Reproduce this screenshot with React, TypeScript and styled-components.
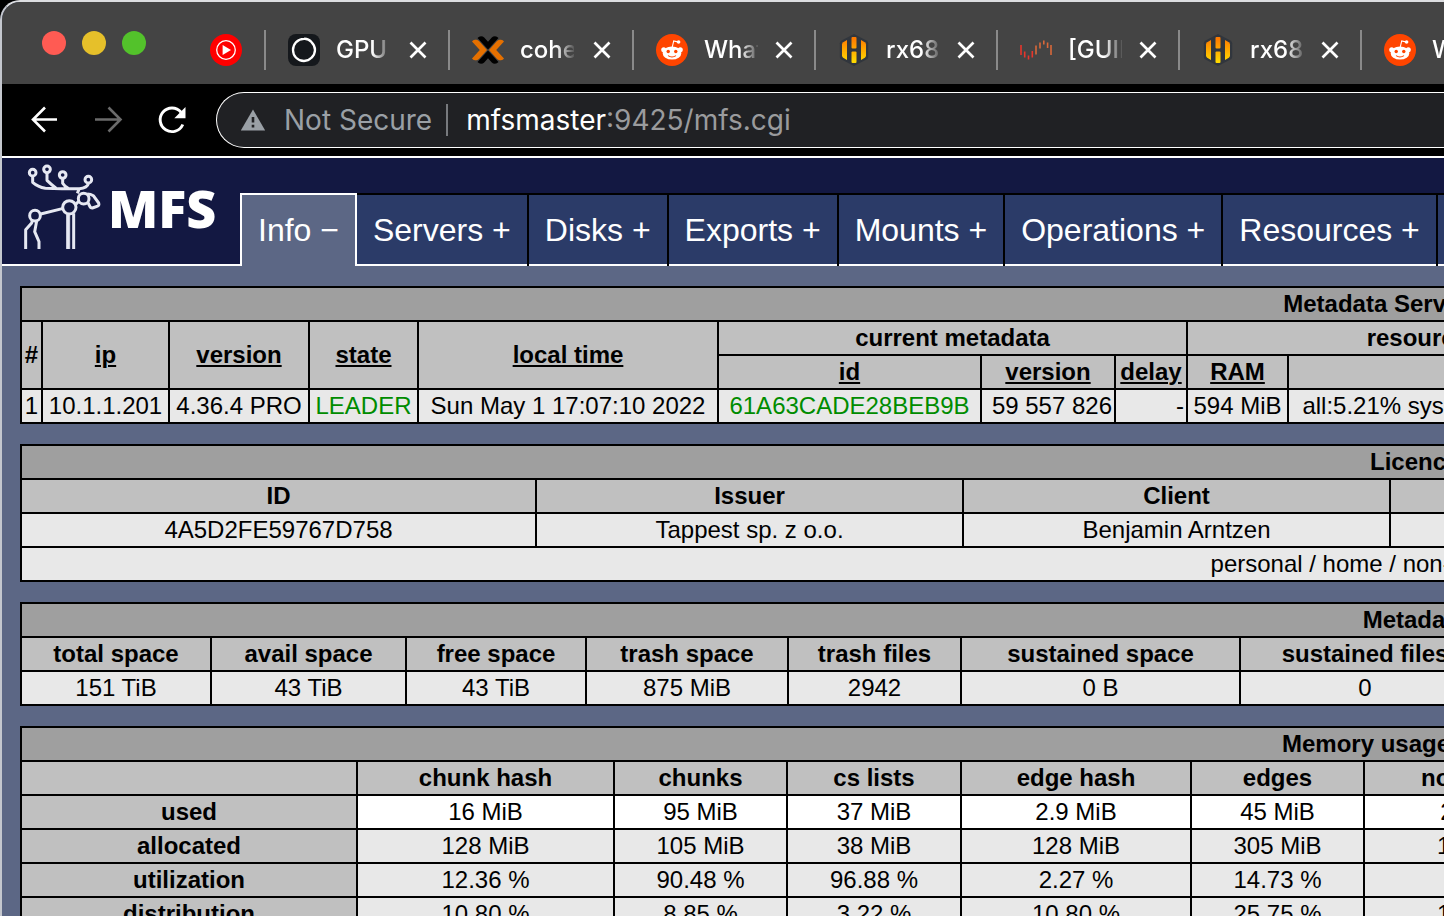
import React from "react";
import styled, { createGlobalStyle, css } from "styled-components";

const GlobalStyle = createGlobalStyle`
  *, *::before, *::after { box-sizing: border-box; }
  html, body { margin: 0; background: #000; }
`;

const uiFont = `Inter, Roboto, sans-serif`;
const pageFont = `"Liberation Sans", Arial, sans-serif`;

/* ---------- browser window ---------- */

const Window = styled.div`
  display: flex;
  flex-direction: column;
  height: 100vh;
  overflow: hidden;
  border-top: 2px solid #dcdde0;
  border-left: 2px solid #c4c7ce;
  border-top-left-radius: 20px;
  background: #5c6785;
`;

const TabStrip = styled.div`
  display: flex;
  flex: none;
  align-items: center;
  height: 82px;
  padding-top: 14px;
  overflow: hidden;
  background: #444;
  font-family: ${uiFont};
`;

const Lights = styled.div`
  display: flex;
  gap: 16px;
  margin: 0 64px 14px 40px;
`;

const Light = styled.button<{ $color: string }>`
  width: 24px;
  height: 24px;
  padding: 0;
  border: 0;
  border-radius: 50%;
  background: ${(p) => p.$color};
`;

const PinnedTab = styled.button`
  display: flex;
  flex: none;
  padding: 0;
  margin-right: 22px;
  border: 0;
  background: none;
`;

const Tab = styled.div<{ $width: number }>`
  display: flex;
  flex: none;
  align-items: center;
  justify-content: space-between;
  width: ${(p) => p.$width}px;
  height: 40px;
  padding: 0 20px 0 22px;
  border-left: 2px solid #8a8a8a;
`;

const TabButton = styled.button`
  display: flex;
  align-items: center;
  gap: 16px;
  padding: 0;
  border: 0;
  background: none;
  color: #fff;
  font: 500 24px/32px ${uiFont};
`;

const TabTitle = styled.span`
  width: 54px;
  overflow: hidden;
  white-space: nowrap;
  text-align: left;
  mask-image: linear-gradient(90deg, #000 36px, transparent 56px);
`;

const CloseButton = styled.button`
  display: flex;
  padding: 0;
  border: 0;
  background: none;
`;

const Toolbar = styled.div`
  display: flex;
  flex: none;
  align-items: center;
  height: 72px;
  padding-left: 26px;
  background: #000;
`;

const ToolButton = styled.button`
  display: flex;
  flex: none;
  margin-right: 32px;
  padding: 0;
  border: 0;
  background: none;
`;

const Omnibox = styled.div`
  display: flex;
  flex: 1;
  align-items: center;
  height: 56px;
  margin-left: -4px;
  padding-left: 23px;
  border: 1px solid #fff;
  border-right: 0;
  border-radius: 28px 0 0 28px;
  background: #202124;
  font: 400 28px/32px ${uiFont};
`;

const Security = styled.button`
  display: flex;
  align-items: center;
  gap: 18px;
  padding: 0 14px 0 0;
  border: 0;
  border-right: 2px solid #777a7e;
  background: none;
  color: #9aa0a6;
  font: inherit;
  white-space: nowrap;
`;

const Host = styled.label`
  margin-left: 18px;
  color: #fff;
`;

const UrlInput = styled.input`
  flex: 1;
  min-width: 0;
  padding: 0;
  border: 0;
  outline: 0;
  background: none;
  color: #9a9b9d;
  font: inherit;
`;

/* ---------- MFS page ---------- */

const Page = styled.main`
  flex: 1;
  min-height: 0;
  overflow: hidden;
  border-top: 2px solid #fff;
  color: #000;
  font: 24px/28px ${pageFont};
`;

const Header = styled.header`
  display: flex;
  height: 108px;
  background: #131842;
`;

const Logo = styled.a`
  display: flex;
  flex: none;
  gap: 6px;
  width: 238px;
  padding: 4px 0 0 18px;
  border-bottom: 2px solid #fff;
  color: #fff;
  text-decoration: none;
`;

const LogoText = styled.span`
  padding-top: 16px;
  font: 800 52px/60px "Open Sans", sans-serif;
`;

const Nav = styled.nav`
  display: flex;
  flex: 1;
  align-items: flex-end;
  overflow: hidden;
  box-shadow: inset 0 -2px #fff;
`;

const NavItem = styled.a<{ $active?: boolean }>`
  flex: none;
  height: 73px;
  padding: 0 16px;
  border: solid #000;
  border-width: 2px 2px 0 0;
  background: #2b3b68;
  box-shadow: inset 0 -2px #fff;
  color: #fff;
  font-size: 32px;
  line-height: 70px;
  text-decoration: none;
  white-space: nowrap;
  ${(p) =>
    p.$active &&
    css`
      border-color: #fff;
      border-left-width: 2px;
      background: #5c6785;
      box-shadow: none;
    `}
`;

const Board = styled.div`
  display: grid;
  gap: 20px;
  min-width: 2876px;
  padding: 20px 18px;
`;

const Grid = styled.table`
  width: 100%;
  table-layout: fixed;
  border-collapse: collapse;
  text-align: center;
  white-space: nowrap;
`;

const cell = css`
  height: 34px;
  padding: 1px 2px;
  border: 2px solid #000;
`;

const Title = styled.th`
  ${cell}
  background: #9f9f9f;
`;

const Head = styled.th`
  ${cell}
  background: #c0c0c0;
`;

const Cell = styled.td<{ $tone?: "white"; $right?: boolean; $good?: boolean }>`
  ${cell}
  background: ${(p) => (p.$tone === "white" ? "#fff" : "#e8e8e8")};
  color: ${(p) => (p.$good ? "#008c00" : "#000")};
  text-align: ${(p) => (p.$right ? "right" : "center")};
`;

const SortLink = styled.a`
  color: inherit;
  text-decoration: underline 2px;
  text-underline-offset: 2px;
`;

const Col = styled.col<{ $width: number }>`
  width: ${(p) => p.$width}px;
`;

function Columns({ widths }: { widths: number[] }) {
  return (
    <colgroup>
      {widths.map((w, i) => (
        <Col key={i} $width={w} />
      ))}
      <col />
    </colgroup>
  );
}

function Sort({ children }: { children: string }) {
  return <SortLink href="#sort">{children}</SortLink>;
}

/* ---------- icons ---------- */

const MusicIcon = () => (
  <svg width="32" height="32" viewBox="0 0 32 32">
    <circle cx="16" cy="16" r="16" fill="#f00" />
    <circle cx="16" cy="16" r="9.3" fill="none" stroke="#fff" strokeWidth="1.3" />
    <path d="M12.6 11v10l8.4-5z" fill="#fff" />
  </svg>
);

const RingIcon = () => (
  <svg width="32" height="32" viewBox="0 0 32 32">
    <rect width="32" height="32" rx="8" fill="#15181c" />
    <path
      d="M16 4.800c3-.3 5.600 1.200 7.500 3.300 2.300 2.200 3.500 4.800 3.500 7.900 0 3-1.400 5.700-3.600 7.800-2 2.100-4.500 3.200-7.400 3.200-3.100 0-5.800-1.200-7.900-3.300C6 21.600 5 19 5 16c0-3 1.200-5.700 3.200-7.900C10.200 6 13 4.900 16 4.800z"
      fill="none"
      stroke="#fff"
      strokeWidth="2.300"
    />
  </svg>
);

const CrossIcon = () => (
  <svg width="32" height="32" viewBox="0 0 32 32">
    <g fill="#e57000">
      <path d="M0 7.500Q1 5.800 3 5.800H4.500Q6 6 7 7L15 16 7 25Q6 26 4.500 26.200H3Q1 26.200 0 24.500L7.800 16z" />
      <path d="M32 7.500Q31 5.800 29 5.800H27.500Q26 6 25 7L17 16l8 9q1 1 2.500 1.200H29q2 0 3-1.700L24.200 16z" />
    </g>
    <g fill="#000">
      <path d="M5.500 4Q7 2.200 9 2.200q2 0 3.200 1.300L16 7.800l3.800-4.300Q21 2.200 23 2.200q2 0 3.500 1.800L16 15.600z" />
      <path d="M5.500 28Q7 29.800 9 29.800q2 0 3.200-1.300L16 24.200l3.800 4.300q1.200 1.300 3.200 1.300 2 0 3.500-1.800L16 16.400z" />
    </g>
  </svg>
);

const RedditIcon = () => (
  <svg width="32" height="32" viewBox="0 0 32 32">
    <circle cx="16" cy="16" r="16" fill="#ff4500" />
    <path d="M16.300 13l1.400-6 5 1.100" fill="none" stroke="#fff" strokeWidth="1.100" />
    <circle cx="22.600" cy="8" r="1.800" fill="#fff" />
    <circle cx="7.700" cy="15.800" r="2.500" fill="#fff" />
    <circle cx="24.300" cy="15.800" r="2.500" fill="#fff" />
    <ellipse cx="16" cy="19" rx="9.400" ry="6.600" fill="#fff" />
    <circle cx="12.200" cy="17.500" r="1.700" fill="#ff4500" />
    <circle cx="19.800" cy="17.500" r="1.700" fill="#ff4500" />
    <path d="M12 21.600q4 2.700 8 0" fill="none" stroke="#ff4500" strokeWidth="1.100" />
  </svg>
);

const HiveIcon = () => (
  <svg width="32" height="32" viewBox="0 0 32 32">
    <defs>
      <linearGradient id="hive" x1="0" y1="0" x2="0" y2="32" gradientUnits="userSpaceOnUse">
        <stop offset="0.150" stopColor="#ff7b00" />
        <stop offset="0.850" stopColor="#ffd800" />
      </linearGradient>
    </defs>
    <path
      d="M16 0l12.500 6.500q1.700 .9 1.700 2.800v13.400q0 1.900-1.700 2.800L16 32 3.500 25.500Q1.800 24.600 1.800 22.700V9.300Q1.800 7.400 3.500 6.500z"
      fill="#31363d"
    />
    <g fill="url(#hive)">
      <path d="M4 10.500q0-1.600 1.200-2.300L9 6v20l-3.800-2.200Q4 23.100 4 21.500z" />
      <path d="M23 6l3.800 2.200Q28 8.900 28 10.500v11q0 1.600-1.200 2.300L23 26z" />
      <rect x="13.500" y="3" width="5" height="11.500" rx="1" />
      <rect x="13.500" y="17.500" width="5" height="11.500" rx="1" />
    </g>
  </svg>
);

const WaveIcon = () => (
  <svg width="32" height="32" viewBox="0 0 32 32">
    <g fill="none" strokeWidth="1.600">
      <path d="M1 11v10M4.700 17.500v6M8.500 21.500v4M12.300 17v6.500" stroke="#e8352b" />
      <path d="M16 11.500v9M20 8.500v6M23.800 6.500v4M27.600 8.500v5.500M31 11v10" stroke="#d9683a" />
    </g>
  </svg>
);

const CloseIcon = () => (
  <svg width="20" height="20" viewBox="0 0 20 20">
    <path d="M2.500 2.500l15 15m0-15l-15 15" stroke="#fff" strokeWidth="2.700" />
  </svg>
);

const ArrowIcon = ({ forward }: { forward?: boolean }) => (
  <svg width="32" height="32" viewBox="0 0 32 32">
    <path
      d={forward ? "M3 15.500h25M16.500 3.500l12 12-12 12" : "M29 15.500H5M17 3.500l-12 12 12 12"}
      fill="none"
      stroke={forward ? "#6b6b6b" : "#fff"}
      strokeWidth="2.600"
    />
  </svg>
);

const ReloadIcon = () => (
  <svg width="32" height="32" viewBox="0 0 32 32">
    <path d="M26.800 20.500A11.800 11.800 0 1 1 25 8.200" fill="none" stroke="#fff" strokeWidth="2.900" />
    <path d="M29.500 3v11.200H18.300z" fill="#fff" />
  </svg>
);

const WarningIcon = () => (
  <svg width="26" height="22" viewBox="0 0 26 22">
    <path d="M13 .5L25.200 21.500H.800z" fill="#9aa0a6" />
    <path d="M13 8v5.500M13 15.800v2.700" stroke="#202124" strokeWidth="2.600" />
  </svg>
);

const MooseIcon = () => (
  <svg width="82" height="88" viewBox="60 36 246 264">
    <g fill="none" stroke="#e6e8f2" strokeWidth="9" strokeLinejoin="round">
      <circle cx="98" cy="68" r="10" />
      <circle cx="141" cy="58" r="10" />
      <circle cx="188" cy="75" r="10" />
      <circle cx="265" cy="89" r="10" />
      <path d="M98 79v18q16 14 38 18l50 1h52q24-2 27-15M141 69v22q12 12 28 24M188 86v14q6 10 18 16M238 116l-6 14" />
      <circle cx="251" cy="146" r="16" />
      <path d="M262 132q10 0 18 5l16 22q3 8-5 10l-14 5q-6 0-8-6l-5-10" />
      <circle cx="208" cy="172" r="20" />
      <path d="M227 163l10-10M190 175l-68 17" />
      <circle cx="105" cy="197" r="16" />
      <path d="M97 211l-2 8-18 20v58M110 213l-6 32 13 30v22" />
      <path d="M203 193v104M221 190v107" />
      <path d="M209 193v104" strokeWidth="3" />
    </g>
  </svg>
);

/* ---------- content ---------- */

const tabs = [
  { icon: <RingIcon />, title: "GPU P", width: 184 },
  { icon: <CrossIcon />, title: "coher", width: 184 },
  { icon: <RedditIcon />, title: "What", width: 182 },
  { icon: <HiveIcon />, title: "rx6800", width: 182 },
  { icon: <WaveIcon />, title: "[GUIDE", width: 182 },
  { icon: <HiveIcon />, title: "rx6800", width: 182 },
  { icon: <RedditIcon />, title: "What", width: 182 },
];

const sections = ["Servers", "Disks", "Exports", "Mounts", "Operations", "Resources", "Quotas"];

const metadata = [
  ["total space", "151 TiB"],
  ["avail space", "43 TiB"],
  ["free space", "43 TiB"],
  ["trash space", "875 MiB"],
  ["trash files", "2942"],
  ["sustained space", "0 B"],
  ["sustained files", "0"],
  ["all fs objects", ""],
];

const memoryHeads = ["chunk hash", "chunks", "cs lists", "edge hash", "edges", "node hash", "nodes"];
const memoryRows = [
  ["used", "16 MiB", "95 MiB", "37 MiB", "2.9 MiB", "45 MiB", "2.7 MiB", ""],
  ["allocated", "128 MiB", "105 MiB", "38 MiB", "128 MiB", "305 MiB", "128 MiB", ""],
  ["utilization", "12.36 %", "90.48 %", "96.88 %", "2.27 %", "14.73 %", "2.14 %", ""],
  ["distribution", "10.80 %", "8.85 %", "3.22 %", "10.80 %", "25.75 %", "10.80 %", ""],
];

export default function App() {
  return (
    <>
      <GlobalStyle />
      <Window>
        <TabStrip>
          <Lights>
            <Light $color="#ff5b53" aria-label="Close window" />
            <Light $color="#e6c02a" aria-label="Minimize window" />
            <Light $color="#53c22b" aria-label="Zoom window" />
          </Lights>
          <PinnedTab aria-label="Music">
            <MusicIcon />
          </PinnedTab>
          {tabs.map((t, i) => (
            <Tab key={i} $width={t.width}>
              <TabButton>
                {t.icon}
                <TabTitle>{t.title}</TabTitle>
              </TabButton>
              <CloseButton aria-label="Close tab">
                <CloseIcon />
              </CloseButton>
            </Tab>
          ))}
        </TabStrip>

        <Toolbar>
          <ToolButton aria-label="Back">
            <ArrowIcon />
          </ToolButton>
          <ToolButton aria-label="Forward">
            <ArrowIcon forward />
          </ToolButton>
          <ToolButton aria-label="Reload">
            <ReloadIcon />
          </ToolButton>
          <Omnibox>
            <Security>
              <WarningIcon />
              Not Secure
            </Security>
            <Host htmlFor="url">mfsmaster</Host>
            <UrlInput id="url" type="text" defaultValue=":9425/mfs.cgi" />
          </Omnibox>
        </Toolbar>

        <Page>
          <Header>
            <Logo href="#home">
              <MooseIcon />
              <LogoText>MFS</LogoText>
            </Logo>
            <Nav>
              <NavItem href="#info" $active>
                Info −
              </NavItem>
              {sections.map((s) => (
                <NavItem key={s} href={`#${s.toLowerCase()}`}>
                  {s} +
                </NavItem>
              ))}
            </Nav>
          </Header>

          <Board>
            <Grid>
              <Columns widths={[21, 127, 140, 109, 300, 263, 134, 72, 101, 373]} />
              <thead>
                <tr>
                  <Title colSpan={11}>Metadata Servers (masters)</Title>
                </tr>
                <tr>
                  <Head rowSpan={2}>#</Head>
                  {["ip", "version", "state", "local time"].map((h) => (
                    <Head key={h} rowSpan={2}>
                      <Sort>{h}</Sort>
                    </Head>
                  ))}
                  <Head colSpan={3}>current metadata</Head>
                  <Head colSpan={2}>resources</Head>
                  <Head rowSpan={2}>last metadata save</Head>
                </tr>
                <tr>
                  {["id", "version", "delay", "RAM", "CPU"].map((h) => (
                    <Head key={h}>
                      <Sort>{h}</Sort>
                    </Head>
                  ))}
                </tr>
              </thead>
              <tbody>
                <tr>
                  <Cell>1</Cell>
                  <Cell>10.1.1.201</Cell>
                  <Cell>4.36.4 PRO</Cell>
                  <Cell $good>LEADER</Cell>
                  <Cell>Sun May 1 17:07:10 2022</Cell>
                  <Cell $good>61A63CADE28BEB9B</Cell>
                  <Cell $right>59 557 826</Cell>
                  <Cell $right>-</Cell>
                  <Cell>594 MiB</Cell>
                  <Cell>all:5.21% sys:3.91% user:1.30%</Cell>
                  <Cell />
                </tr>
              </tbody>
            </Grid>

            <Grid>
              <Columns widths={[515, 427, 427]} />
              <thead>
                <tr>
                  <Title colSpan={4}>Licence info</Title>
                </tr>
                <tr>
                  <Head>ID</Head>
                  <Head>Issuer</Head>
                  <Head>Client</Head>
                  <Head>Type</Head>
                </tr>
              </thead>
              <tbody>
                <tr>
                  <Cell>4A5D2FE59767D758</Cell>
                  <Cell>Tappest sp. z o.o.</Cell>
                  <Cell>Benjamin Arntzen</Cell>
                  <Cell />
                </tr>
                <tr>
                  <Cell colSpan={4}>personal / home / non-commercial use only</Cell>
                </tr>
              </tbody>
            </Grid>

            <Grid>
              <Columns widths={[190, 195, 180, 202, 173, 279, 250]} />
              <thead>
                <tr>
                  <Title colSpan={8}>Metadata info</Title>
                </tr>
                <tr>
                  {metadata.map(([h]) => (
                    <Head key={h}>{h}</Head>
                  ))}
                </tr>
              </thead>
              <tbody>
                <tr>
                  {metadata.map(([h, v]) => (
                    <Cell key={h}>{v}</Cell>
                  ))}
                </tr>
              </tbody>
            </Grid>

            <Grid>
              <Columns widths={[336, 257, 173, 174, 230, 173, 234]} />
              <thead>
                <tr>
                  <Title colSpan={8}>Memory usage detailed info</Title>
                </tr>
                <tr>
                  <Head />
                  {memoryHeads.map((h) => (
                    <Head key={h}>{h}</Head>
                  ))}
                </tr>
              </thead>
              <tbody>
                {memoryRows.map(([name, ...values]) => (
                  <tr key={name}>
                    <Head scope="row">{name}</Head>
                    {values.map((v, i) => (
                      <Cell key={i} $tone={name === "used" ? "white" : undefined}>
                        {v}
                      </Cell>
                    ))}
                  </tr>
                ))}
              </tbody>
            </Grid>
          </Board>
        </Page>
      </Window>
    </>
  );
}
